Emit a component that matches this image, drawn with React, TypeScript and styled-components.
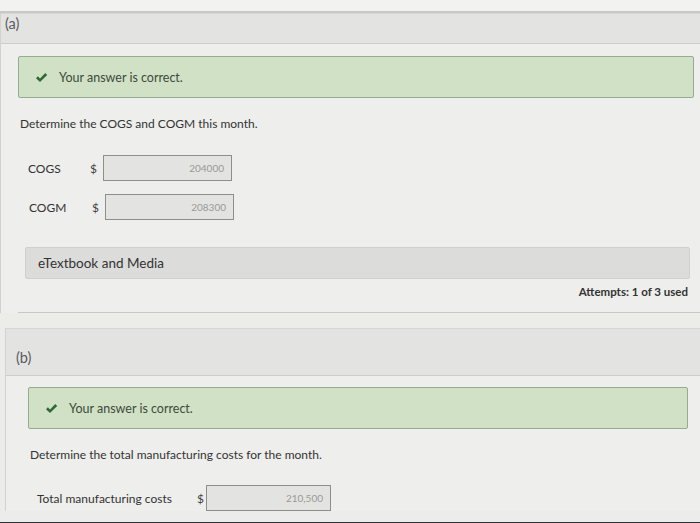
import React from 'react'
import styled, { createGlobalStyle } from 'styled-components'

const GlobalStyle = createGlobalStyle`
   html, body {
      margin: 0;
      padding: 0;
      background: #ebebe9;
   }
   body {
      font-family: Lato, "Open Sans", "Liberation Sans", sans-serif;
      color: #3a3a3a;
   }
`

const Page = styled.div`
   width: 700px;
   height: 523px;
   overflow: hidden;
   display: flex;
   flex-direction: column;
   background: #ececea;
`

const TopStrip = styled.div`
   height: 11px;
   background: #f2f2f0;
   border-bottom: 2px solid #c9c9c7;
`

const Part = styled.section<{ $left: number }>`
   margin-left: ${p => p.$left}px;
   border-left: 1px solid #d2d2d0;
   display: flex;
   flex-direction: column;
`

const PartHeader = styled.div<{ $height: number, $pad: number, $top: number }>`
   height: ${p => p.$height}px;
   box-sizing: border-box;
   padding: ${p => p.$top}px 0 0 ${p => p.$pad}px;
   background: #e3e3e1;
   border-top: 1px solid #d6d6d4;
   border-bottom: 1px solid #cdcdcb;
   font-size: 14.5px;
   line-height: 16px;
   color: #5a5a62;
`

const PartBody = styled.div<{ $pad: number }>`
   padding-left: ${p => p.$pad}px;
   display: flex;
   flex-direction: column;
   background: #eeeeec;
`

const Correct = styled.div<{ $top: number, $right: number }>`
   margin-top: ${p => p.$top}px;
   margin-right: ${p => p.$right}px;
   height: 40px;
   display: flex;
   align-items: center;
   gap: 11px;
   padding-left: 16px;
   background: #d0e1c5;
   border: 1px solid #97ab90;
   border-radius: 2px;
   font-size: 12.5px;
   color: #3e4a3c;
`

const Prompt = styled.p<{ $top: number, $left: number }>`
   margin: ${p => p.$top}px 0 0 ${p => p.$left}px;
   font-size: 12px;
   line-height: 14px;
   color: #333;
`

const Row = styled.div<{ $top: number, $left: number }>`
   margin: ${p => p.$top}px 0 0 ${p => p.$left}px;
   display: flex;
   align-items: center;
`

const Label = styled.span<{ $width: number }>`
   width: ${p => p.$width}px;
   font-size: 12px;
   color: #333;
`

const Dollar = styled.span<{ $width: number }>`
   width: ${p => p.$width}px;
   font-size: 12px;
   color: #444;
`

const Answer = styled.div<{ $width: number }>`
   width: ${p => p.$width}px;
   height: 24px;
   box-sizing: content-box;
   display: flex;
   align-items: center;
   justify-content: flex-end;
   padding-right: 7px;
   background: #e3e3e1;
   border: 1px solid #8e8e8c;
   font-size: 10px;
   color: #9a9a98;
`

const Media = styled.div`
   margin: 27px 10px 0 7px;
   height: 30px;
   display: flex;
   align-items: center;
   padding-left: 12px;
   background: #dcdcda;
   border: 1px solid #d0d0ce;
   border-radius: 2px;
   font-size: 13.5px;
   color: #333;
`

const Attempts = styled.div`
   margin: 6px 12px 0 0;
   height: 14px;
   text-align: right;
   font-size: 11.5px;
   font-weight: 700;
   color: #333;
`

const PartEnd = styled.div<{ $height: number }>`
   height: ${p => p.$height}px;
   border-bottom: 1px solid #c8c8c6;
`

const Gap = styled.div<{ $height: number }>`
   height: ${p => p.$height}px;
   background: #ecece9;
`

const BottomEdge = styled.div`
   flex: 1;
   margin-top: 11px;
   background: #4a4b4f;
   border-top: 1px solid #2e2f33;
`

const Check = () => (
   <svg width="13" height="11" viewBox="0 0 13 11">
      <path d="M1 6.2 L2.9 4.3 L5 6.4 L10.3 1 L12.2 2.9 L5 10 Z" fill="#2f6a36" />
   </svg>
)

const App: React.FC = () => {
   return (
      <Page>
         <GlobalStyle />
         <TopStrip />
         <Part $left={0}>
            <PartHeader $height={31} $pad={4} $top={2}>(a)</PartHeader>
            <PartBody $pad={17}>
               <Correct $top={12} $right={6}>
                  <Check />
                  Your answer is correct.
               </Correct>
               <Prompt $top={19} $left={2}>Determine the COGS and COGM this month.</Prompt>
               <Row $top={24} $left={10}>
                  <Label $width={62}>COGS</Label>
                  <Dollar $width={13}>$</Dollar>
                  <Answer $width={120}>204000</Answer>
               </Row>
               <Row $top={13} $left={11}>
                  <Label $width={63}>COGM</Label>
                  <Dollar $width={13}>$</Dollar>
                  <Answer $width={120}>208300</Answer>
               </Row>
               <Media>eTextbook and Media</Media>
               <Attempts>Attempts: 1 of 3 used</Attempts>
               <PartEnd $height={13} />
            </PartBody>
         </Part>
         <Gap $height={15} />
         <Part $left={5}>
            <PartHeader $height={48} $pad={10} $top={21}>(b)</PartHeader>
            <PartBody $pad={22}>
               <Correct $top={11} $right={12}>
                  <Check />
                  Your answer is correct.
               </Correct>
               <Prompt $top={19} $left={2}>Determine the total manufacturing costs for the month.</Prompt>
               <Row $top={23} $left={9}>
                  <Label $width={160}>Total manufacturing costs</Label>
                  <Dollar $width={9}>$</Dollar>
                  <Answer $width={116}>210,500</Answer>
               </Row>
            </PartBody>
         </Part>
         <BottomEdge />
      </Page>
   )
}

export default App
